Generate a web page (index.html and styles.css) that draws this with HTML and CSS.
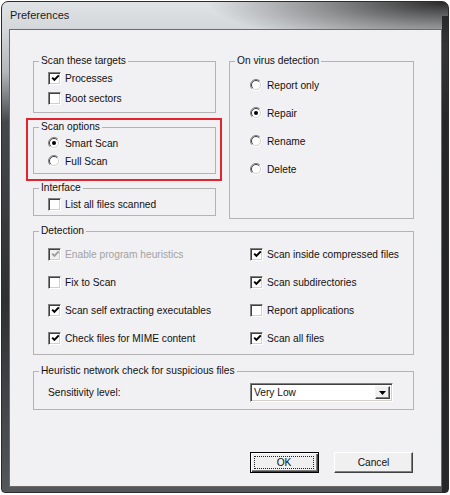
FILE: index.html
```html
<!DOCTYPE html>
<html>
<head>
<meta charset="utf-8">
<title>Preferences</title>
<link rel="stylesheet" href="styles.css">
</head>
<body>
<div class="window">
  <div class="titlebar">Preferences</div>
  <div class="client">
    <div class="top">
      <div class="col">
        <fieldset class="grp g-targets">
          <legend>Scan these targets</legend>
          <div class="body rows20">
            <div class="item"><span class="cb"><svg viewBox="0 0 9 9" width="9" height="9"><path class="tick" d="M1.2 3.6 L3.4 5.9 L7.8 1.4"/></svg></span>Processes</div>
            <div class="item"><span class="cb"></span>Boot sectors</div>
          </div>
        </fieldset>
        <div class="highlight">
          <fieldset class="grp g-options">
            <legend>Scan options</legend>
            <div class="body rows18">
              <div class="item r"><svg class="radio" viewBox="0 0 12 12" width="12" height="12"><circle cx="6" cy="6" r="5" fill="#fff"/><path d="M2.1 9.9 A5.5 5.5 0 0 1 9.9 2.1" class="o1"/><path d="M2.8 9.2 A4.5 4.5 0 0 1 9.2 2.8" class="i1"/><path d="M9.9 2.1 A5.5 5.5 0 0 1 2.1 9.9" class="o2"/><path d="M9.2 2.8 A4.5 4.5 0 0 1 2.8 9.2" class="i2"/><circle cx="6" cy="6" r="2" fill="#000"/></svg>Smart Scan</div>
              <div class="item r"><svg class="radio" viewBox="0 0 12 12" width="12" height="12"><circle cx="6" cy="6" r="5" fill="#fff"/><path d="M2.1 9.9 A5.5 5.5 0 0 1 9.9 2.1" class="o1"/><path d="M2.8 9.2 A4.5 4.5 0 0 1 9.2 2.8" class="i1"/><path d="M9.9 2.1 A5.5 5.5 0 0 1 2.1 9.9" class="o2"/><path d="M9.2 2.8 A4.5 4.5 0 0 1 2.8 9.2" class="i2"/></svg>Full Scan</div>
            </div>
          </fieldset>
        </div>
        <fieldset class="grp g-interface">
          <legend>Interface</legend>
          <div class="body rows18">
            <div class="item"><span class="cb"></span>List all files scanned</div>
          </div>
        </fieldset>
      </div>
      <fieldset class="grp g-virus">
        <legend>On virus detection</legend>
        <div class="body rows28 virus">
          <div class="item r"><svg class="radio" viewBox="0 0 12 12" width="12" height="12"><circle cx="6" cy="6" r="5" fill="#fff"/><path d="M2.1 9.9 A5.5 5.5 0 0 1 9.9 2.1" class="o1"/><path d="M2.8 9.2 A4.5 4.5 0 0 1 9.2 2.8" class="i1"/><path d="M9.9 2.1 A5.5 5.5 0 0 1 2.1 9.9" class="o2"/><path d="M9.2 2.8 A4.5 4.5 0 0 1 2.8 9.2" class="i2"/></svg>Report only</div>
          <div class="item r"><svg class="radio" viewBox="0 0 12 12" width="12" height="12"><circle cx="6" cy="6" r="5" fill="#fff"/><path d="M2.1 9.9 A5.5 5.5 0 0 1 9.9 2.1" class="o1"/><path d="M2.8 9.2 A4.5 4.5 0 0 1 9.2 2.8" class="i1"/><path d="M9.9 2.1 A5.5 5.5 0 0 1 2.1 9.9" class="o2"/><path d="M9.2 2.8 A4.5 4.5 0 0 1 2.8 9.2" class="i2"/><circle cx="6" cy="6" r="2" fill="#000"/></svg>Repair</div>
          <div class="item r"><svg class="radio" viewBox="0 0 12 12" width="12" height="12"><circle cx="6" cy="6" r="5" fill="#fff"/><path d="M2.1 9.9 A5.5 5.5 0 0 1 9.9 2.1" class="o1"/><path d="M2.8 9.2 A4.5 4.5 0 0 1 9.2 2.8" class="i1"/><path d="M9.9 2.1 A5.5 5.5 0 0 1 2.1 9.9" class="o2"/><path d="M9.2 2.8 A4.5 4.5 0 0 1 2.8 9.2" class="i2"/></svg>Rename</div>
          <div class="item r"><svg class="radio" viewBox="0 0 12 12" width="12" height="12"><circle cx="6" cy="6" r="5" fill="#fff"/><path d="M2.1 9.9 A5.5 5.5 0 0 1 9.9 2.1" class="o1"/><path d="M2.8 9.2 A4.5 4.5 0 0 1 9.2 2.8" class="i1"/><path d="M9.9 2.1 A5.5 5.5 0 0 1 2.1 9.9" class="o2"/><path d="M9.2 2.8 A4.5 4.5 0 0 1 2.8 9.2" class="i2"/></svg>Delete</div>
        </div>
      </fieldset>
    </div>

    <fieldset class="grp g-detect">
      <legend>Detection</legend>
      <div class="body grid2 detect">
        <div class="item disabled"><span class="cb"><svg viewBox="0 0 9 9" width="9" height="9"><path class="tick" d="M1.2 3.6 L3.4 5.9 L7.8 1.4"/></svg></span>Enable program heuristics</div>
        <div class="item"><span class="cb"><svg viewBox="0 0 9 9" width="9" height="9"><path class="tick" d="M1.2 3.6 L3.4 5.9 L7.8 1.4"/></svg></span>Scan inside compressed files</div>
        <div class="item"><span class="cb"></span>Fix to Scan</div>
        <div class="item"><span class="cb"><svg viewBox="0 0 9 9" width="9" height="9"><path class="tick" d="M1.2 3.6 L3.4 5.9 L7.8 1.4"/></svg></span>Scan subdirectories</div>
        <div class="item"><span class="cb"><svg viewBox="0 0 9 9" width="9" height="9"><path class="tick" d="M1.2 3.6 L3.4 5.9 L7.8 1.4"/></svg></span>Scan self extracting executables</div>
        <div class="item"><span class="cb"></span>Report applications</div>
        <div class="item"><span class="cb"><svg viewBox="0 0 9 9" width="9" height="9"><path class="tick" d="M1.2 3.6 L3.4 5.9 L7.8 1.4"/></svg></span>Check files for MIME content</div>
        <div class="item"><span class="cb"><svg viewBox="0 0 9 9" width="9" height="9"><path class="tick" d="M1.2 3.6 L3.4 5.9 L7.8 1.4"/></svg></span>Scan all files</div>
      </div>
    </fieldset>

    <fieldset class="grp g-heur">
      <legend>Heuristic network check for suspicious files</legend>
      <div class="body grid2 heur">
        <div class="item">Sensitivity level:</div>
        <div class="select">
          <span class="sel-text">Very Low</span>
          <span class="dd"><svg viewBox="0 0 7 4" width="7" height="4"><path d="M0 0 H7 L3.5 4 Z" fill="#000"/></svg></span>
        </div>
      </div>
    </fieldset>

    <div class="buttons">
      <div class="btn ok"><span class="focus">OK</span></div>
      <div class="btn cancel">Cancel</div>
    </div>
  </div>
</div>
</body>
</html>
```

FILE: styles.css
```css
* { box-sizing: border-box; }

body {
  margin: 0;
  background: #fff;
  font-family: "Liberation Sans", Arial, sans-serif;
  font-size: 10.2px;
  color: #111;
}

.window {
  margin: 1px 0 0 1px;
  width: 448px;
  height: 492px;
  border: 1px solid #2b2b2b;
  border-radius: 7px 7px 4px 4px;
  padding: 0 6px 5px 7px;
  display: flex;
  flex-direction: column;
  background:
    linear-gradient(to left, rgba(35,35,35,.9) 0, rgba(35,35,35,.9) 6px, rgba(35,35,35,0) 6px) right 0 top 14px / 8px 100% no-repeat,
    radial-gradient(ellipse 240px 44px at 100% 0, rgba(30,30,30,.95), rgba(30,30,30,.4) 55%, rgba(30,30,30,0)),
    linear-gradient(to bottom, #e0e3e6 0, #d4d7da 28px, #b4b7ba 70px, #45484a 120px, #2e3032 300px, #55585b 100%);
}

.titlebar {
  height: 27px;
  line-height: 27px;
  padding-left: 1px;
  font-size: 11px;
  color: #1b1b1b;
}

.client {
  flex: 1;
  border: 1px solid #6c6c6c;
  background: #f1f0f2;
  padding: 24px 0 0 23px;
}

.top {
  display: grid;
  grid-template-columns: 183px 185px;
  column-gap: 13px;
  align-items: start;
}

.col {
  display: flex;
  flex-direction: column;
}

.grp {
  margin: 0;
  padding: 0;
  border: 1px solid #b3b3b3;
  min-width: 0;
}

.grp legend {
  padding: 0 2px;
  margin-left: 5px;
  line-height: 14px;
}

.g-targets { height: 59px; }
.g-options { height: 54px; }
.g-interface { height: 35px; }
.g-virus { height: 165px; }

.highlight {
  margin: 5px -6px 0 -7px;
  border: 2px solid #e2242f;
  padding: 0 4px 5px 5px;
}

.g-detect {
  width: 381px;
  height: 131px;
  margin-top: 5px;
}

.g-heur {
  width: 381px;
  height: 46px;
  margin-top: 9px;
}

.body { padding-left: 14px; }

.item {
  display: flex;
  align-items: center;
  gap: 4px;
  white-space: nowrap;
}
.item.r { gap: 5px; }

.rows20 .item { height: 20px; }
.rows18 .item { height: 18px; }
.rows28 .item { height: 28px; }
.virus { padding-top: 3px; padding-left: 20px; }

.grid2 {
  display: grid;
  grid-template-columns: 202px 1fr;
}
.detect { padding-top: 2px; grid-auto-rows: 28px; }
.heur { padding-top: 5px; grid-auto-rows: 19px; }

.cb {
  flex: none;
  width: 13px;
  height: 13px;
  background: #fff;
  border: 1px solid;
  border-color: #808080 #fff #fff #808080;
  box-shadow: inset 1px 1px 0 #404040, inset -1px -1px 0 #d4d0c8;
  display: flex;
  align-items: center;
  justify-content: center;
}
.cb svg { display: block; margin: 1px 0 0 1px; }
.tick { fill: none; stroke: #000; stroke-width: 2; }

.radio { flex: none; display: block; }
.radio path { fill: none; stroke-width: 1; }
.radio .o1 { stroke: #808080; }
.radio .i1 { stroke: #404040; }
.radio .o2 { stroke: #fff; }
.radio .i2 { stroke: #d4d0c8; }

.disabled { color: #a2a2a2; }
.disabled .cb { background: #f1f0f2; }
.disabled .tick { stroke: #a0a0a0; }

.select {
  width: 143px;
  height: 19px;
  display: flex;
  align-items: center;
  background: #fff;
  border: 1px solid;
  border-color: #808080 #fff #fff #808080;
  box-shadow: inset 1px 1px 0 #404040, inset -1px -1px 0 #d4d0c8;
  padding: 2px 2px 2px 3px;
}
.sel-text { flex: 1; }
.dd {
  width: 15px;
  height: 13px;
  background: #f0f0f0;
  border: 1px solid;
  border-color: #f4f4f4 #404040 #404040 #f4f4f4;
  box-shadow: inset -1px -1px 0 #808080;
  display: flex;
  align-items: center;
  justify-content: center;
}
.dd svg { display: block; }

.buttons {
  width: 381px;
  margin-top: 42px;
  display: flex;
  justify-content: flex-end;
  gap: 15px;
  padding-right: 1px;
}

.btn {
  height: 21px;
  background: #f0f0f0;
  border: 1px solid;
  border-color: #fff #404040 #404040 #fff;
  box-shadow: inset -1px -1px 0 #808080;
  display: flex;
  align-items: center;
  justify-content: center;
}
.btn.ok {
  width: 69px;
  border-color: #000;
  box-shadow: inset 1px 1px 0 #fff, inset -1px -1px 0 #404040, inset -2px -2px 0 #808080;
  padding: 3px 4px 3px 3px;
  align-items: stretch;
}
.focus {
  flex: 1;
  border: 1px dotted #222;
  display: flex;
  align-items: center;
  justify-content: center;
}
.btn.cancel { width: 79px; }
```
